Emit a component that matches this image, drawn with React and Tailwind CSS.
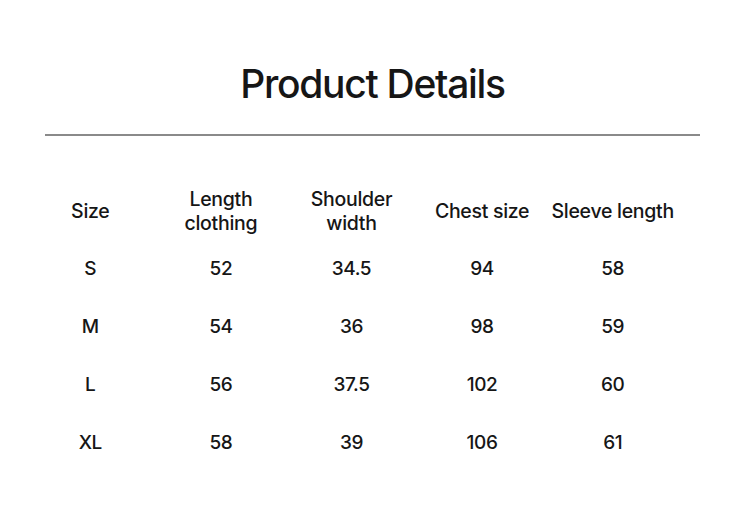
const headers = ["Size", "Length clothing", "Shoulder width", "Chest size", "Sleeve length"];

const rows = [
  ["S", "52", "34.5", "94", "58"],
  ["M", "54", "36", "98", "59"],
  ["L", "56", "37.5", "102", "60"],
  ["XL", "58", "39", "106", "61"],
];

export default function App() {
  return (
    <div className="w-[745px] h-[532px] bg-white text-[#161616] font-['Inter',sans-serif] overflow-hidden">
      <h1 className="pt-[59px] text-center text-[39px] leading-[50px] font-medium tracking-[-0.033em]">
        Product Details
      </h1>
      <div className="mx-[45px] mt-[25px] h-[2px] bg-[#8a8a8a]" />

      <div className="ml-[25px] w-[653px] mt-[46px] font-medium">
        <div className="grid grid-cols-5 h-[58px] items-center text-center text-[19.5px] leading-[24px] tracking-[-0.015em]">
          {headers.map((h) => (
            <div key={h} className={h === "Chest size" || h === "Sleeve length" || h === "Size" ? "" : "px-[24px]"}>
              {h}
            </div>
          ))}
        </div>
        {rows.map((r) => (
          <div key={r[0]} className="grid grid-cols-5 h-[58px] items-center text-center text-[19px] tracking-[-0.02em]">
            {r.map((c, i) => (
              <div key={i}>{c}</div>
            ))}
          </div>
        ))}
      </div>
    </div>
  );
}
